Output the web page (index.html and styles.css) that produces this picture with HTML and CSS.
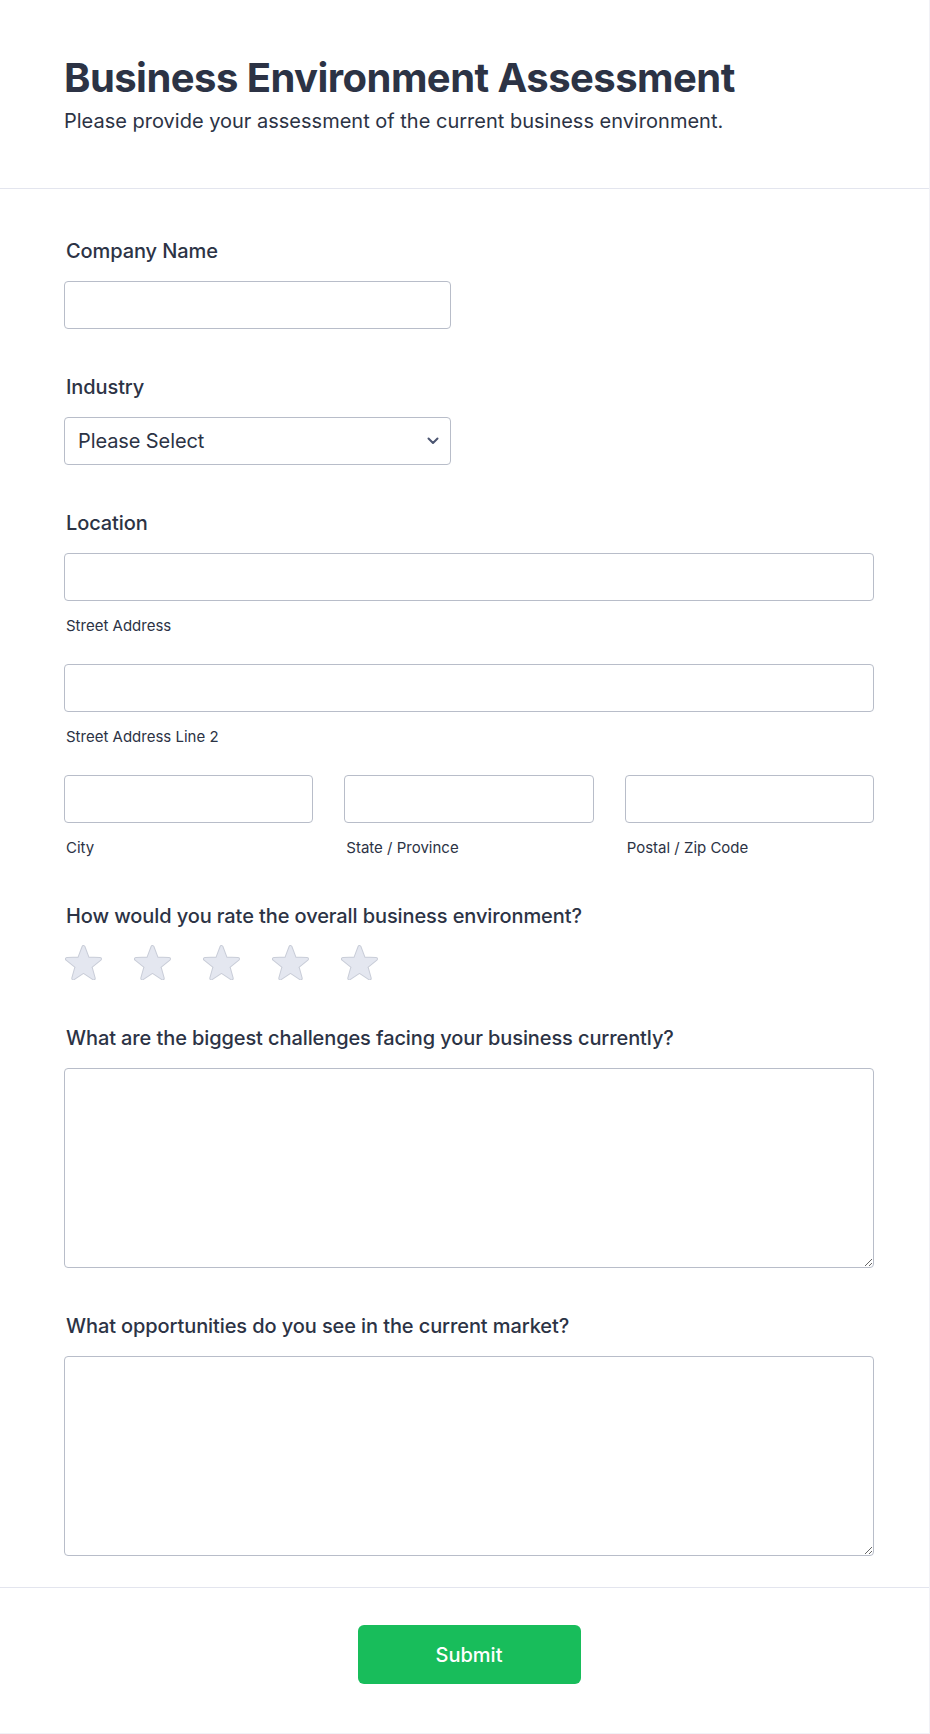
FILE: index.html
```html
<!DOCTYPE html>
<html lang="en">
<head>
<meta charset="utf-8">
<title>Business Environment Assessment</title>
<link rel="stylesheet" href="styles.css">
</head>
<body>
<div class="page">
  <header class="header">
    <h1 class="title">Business Environment Assessment</h1>
    <p class="subtitle">Please provide your assessment of the current business environment.</p>
  </header>
  <form class="form">
    <div class="field">
      <label class="label" for="company">Company Name</label>
      <input class="input input-half" id="company" type="text">
    </div>
    <div class="field">
      <label class="label" for="industry">Industry</label>
      <div class="select-wrap">
        <select class="select" id="industry">
          <option>Please Select</option>
        </select>
        <svg class="chevron" width="12" height="8" viewBox="0 0 12 8"><path d="M1.5 1.5 L6 6 L10.5 1.5" fill="none" stroke="#4b5571" stroke-width="2" stroke-linecap="round" stroke-linejoin="round"/></svg>
      </div>
    </div>
    <div class="field">
      <span class="label">Location</span>
      <div class="sub">
        <input class="input" type="text">
        <span class="sublabel">Street Address</span>
      </div>
      <div class="sub">
        <input class="input" type="text">
        <span class="sublabel">Street Address Line 2</span>
      </div>
      <div class="sub-row">
        <div class="sub">
          <input class="input" type="text">
          <span class="sublabel">City</span>
        </div>
        <div class="sub">
          <input class="input" type="text">
          <span class="sublabel">State / Province</span>
        </div>
        <div class="sub">
          <input class="input" type="text">
          <span class="sublabel">Postal / Zip Code</span>
        </div>
      </div>
    </div>
    <div class="field">
      <span class="label">How would you rate the overall business environment?</span>
      <div class="stars">
        <svg class="star" viewBox="0 0 37 35"><path class="star-edge" d="M18.5 2 L22.79 13.45 L35 13.99 L25.43 21.6 L28.7 33.39 L18.5 26.64 L8.3 33.39 L11.57 21.6 L2 13.99 L14.21 13.45 Z"/><path class="star-fill" d="M18.5 2 L22.79 13.45 L35 13.99 L25.43 21.6 L28.7 33.39 L18.5 26.64 L8.3 33.39 L11.57 21.6 L2 13.99 L14.21 13.45 Z"/></svg>
        <svg class="star" viewBox="0 0 37 35"><path class="star-edge" d="M18.5 2 L22.79 13.45 L35 13.99 L25.43 21.6 L28.7 33.39 L18.5 26.64 L8.3 33.39 L11.57 21.6 L2 13.99 L14.21 13.45 Z"/><path class="star-fill" d="M18.5 2 L22.79 13.45 L35 13.99 L25.43 21.6 L28.7 33.39 L18.5 26.64 L8.3 33.39 L11.57 21.6 L2 13.99 L14.21 13.45 Z"/></svg>
        <svg class="star" viewBox="0 0 37 35"><path class="star-edge" d="M18.5 2 L22.79 13.45 L35 13.99 L25.43 21.6 L28.7 33.39 L18.5 26.64 L8.3 33.39 L11.57 21.6 L2 13.99 L14.21 13.45 Z"/><path class="star-fill" d="M18.5 2 L22.79 13.45 L35 13.99 L25.43 21.6 L28.7 33.39 L18.5 26.64 L8.3 33.39 L11.57 21.6 L2 13.99 L14.21 13.45 Z"/></svg>
        <svg class="star" viewBox="0 0 37 35"><path class="star-edge" d="M18.5 2 L22.79 13.45 L35 13.99 L25.43 21.6 L28.7 33.39 L18.5 26.64 L8.3 33.39 L11.57 21.6 L2 13.99 L14.21 13.45 Z"/><path class="star-fill" d="M18.5 2 L22.79 13.45 L35 13.99 L25.43 21.6 L28.7 33.39 L18.5 26.64 L8.3 33.39 L11.57 21.6 L2 13.99 L14.21 13.45 Z"/></svg>
        <svg class="star" viewBox="0 0 37 35"><path class="star-edge" d="M18.5 2 L22.79 13.45 L35 13.99 L25.43 21.6 L28.7 33.39 L18.5 26.64 L8.3 33.39 L11.57 21.6 L2 13.99 L14.21 13.45 Z"/><path class="star-fill" d="M18.5 2 L22.79 13.45 L35 13.99 L25.43 21.6 L28.7 33.39 L18.5 26.64 L8.3 33.39 L11.57 21.6 L2 13.99 L14.21 13.45 Z"/></svg>
      </div>
    </div>
    <div class="field">
      <label class="label" for="challenges">What are the biggest challenges facing your business currently?</label>
      <textarea class="textarea" id="challenges"></textarea>
    </div>
    <div class="field">
      <label class="label" for="opps">What opportunities do you see in the current market?</label>
      <textarea class="textarea" id="opps"></textarea>
    </div>
  </form>
  <footer class="footer">
    <button class="submit" type="button">Submit</button>
  </footer>
</div>
</body>
</html>
```

FILE: styles.css
```css
* { box-sizing: border-box; }

html, body {
  margin: 0;
  padding: 0;
  background: #ffffff;
}

body {
  font-family: Inter, "Noto Sans", sans-serif;
  color: #2c3345;
}

.page {
  width: 930px;
  min-height: 1734px;
  border-right: 1px solid #f1f1f6;
  border-bottom: 1px solid #f1f1f6;
}

.header {
  padding: 54px 64px 53px;
  border-bottom: 1px solid #e3e5ee;
}

.title {
  margin: 0;
  font-size: 40px;
  line-height: 48px;
  font-weight: 700;
  letter-spacing: -0.55px;
  color: #2c3345;
}

.subtitle {
  margin: 6px 0 0;
  font-size: 20px;
  line-height: 27px;
  font-weight: 400;
  color: #2c3345;
}

.form {
  padding: 48px 55px 31px 64px;
  display: flex;
  flex-direction: column;
  gap: 44px;
}

.field {
  display: flex;
  flex-direction: column;
}

.label {
  display: block;
  margin: 0 0 16px 2px;
  padding-top: 1px;
  font-size: 20px;
  line-height: 27px;
  font-weight: 500;
  letter-spacing: -0.1px;
  color: #2c3345;
}

.input {
  display: block;
  width: 100%;
  height: 48px;
  border: 1px solid #b8bdc9;
  border-radius: 4px;
  background: #fff;
  font-family: inherit;
  font-size: 16px;
  padding: 0 12px;
  margin: 0;
}

.input-half { width: 387px; }

.select-wrap {
  position: relative;
  width: 387px;
}

.select {
  display: block;
  width: 100%;
  height: 48px;
  border: 1px solid #b8bdc9;
  border-radius: 4px;
  background: #fff;
  font-family: inherit;
  font-size: 20px;
  letter-spacing: -0.1px;
  color: #2c3345;
  padding: 0 40px 0 13px;
  margin: 0;
  appearance: none;
  -webkit-appearance: none;
}

.chevron {
  position: absolute;
  right: 12px;
  top: 20px;
}

.sub {
  display: flex;
  flex-direction: column;
}

.sub + .sub,
.sub + .sub-row {
  margin-top: 28px;
}

.sub-row {
  display: grid;
  grid-template-columns: repeat(3, 1fr);
  gap: 31px;
}

.sub-row .sub + .sub { margin-top: 0; }

.sublabel {
  display: block;
  margin: 15px 0 0 2px;
  font-size: 15px;
  line-height: 20px;
  color: #2c3345;
}

.stars {
  display: flex;
  gap: 32px;
  margin-top: -1px;
  padding-left: 1px;
}

.star {
  width: 37px;
  height: 35px;
  display: block;
}

.star-edge {
  fill: #c9cdd8;
  stroke: #c9cdd8;
  stroke-width: 4;
  stroke-linejoin: round;
}

.star-fill {
  fill: #e4e7f0;
  stroke: #e4e7f0;
  stroke-width: 2;
  stroke-linejoin: round;
}

.textarea {
  display: block;
  width: 100%;
  height: 200px;
  border: 1px solid #b8bdc9;
  border-radius: 4px;
  background: #fff;
  font-family: inherit;
  font-size: 16px;
  padding: 10px 12px;
  margin: 0;
  resize: vertical;
}

.footer {
  border-top: 1px solid #e3e5ee;
  padding: 37px 55px 49px 64px;
  display: flex;
  justify-content: center;
}

.submit {
  width: 223px;
  height: 59px;
  border: none;
  border-radius: 6px;
  background: #18bd5b;
  color: #ffffff;
  font-family: inherit;
  font-size: 20px;
  font-weight: 500;
  cursor: pointer;
}
```
